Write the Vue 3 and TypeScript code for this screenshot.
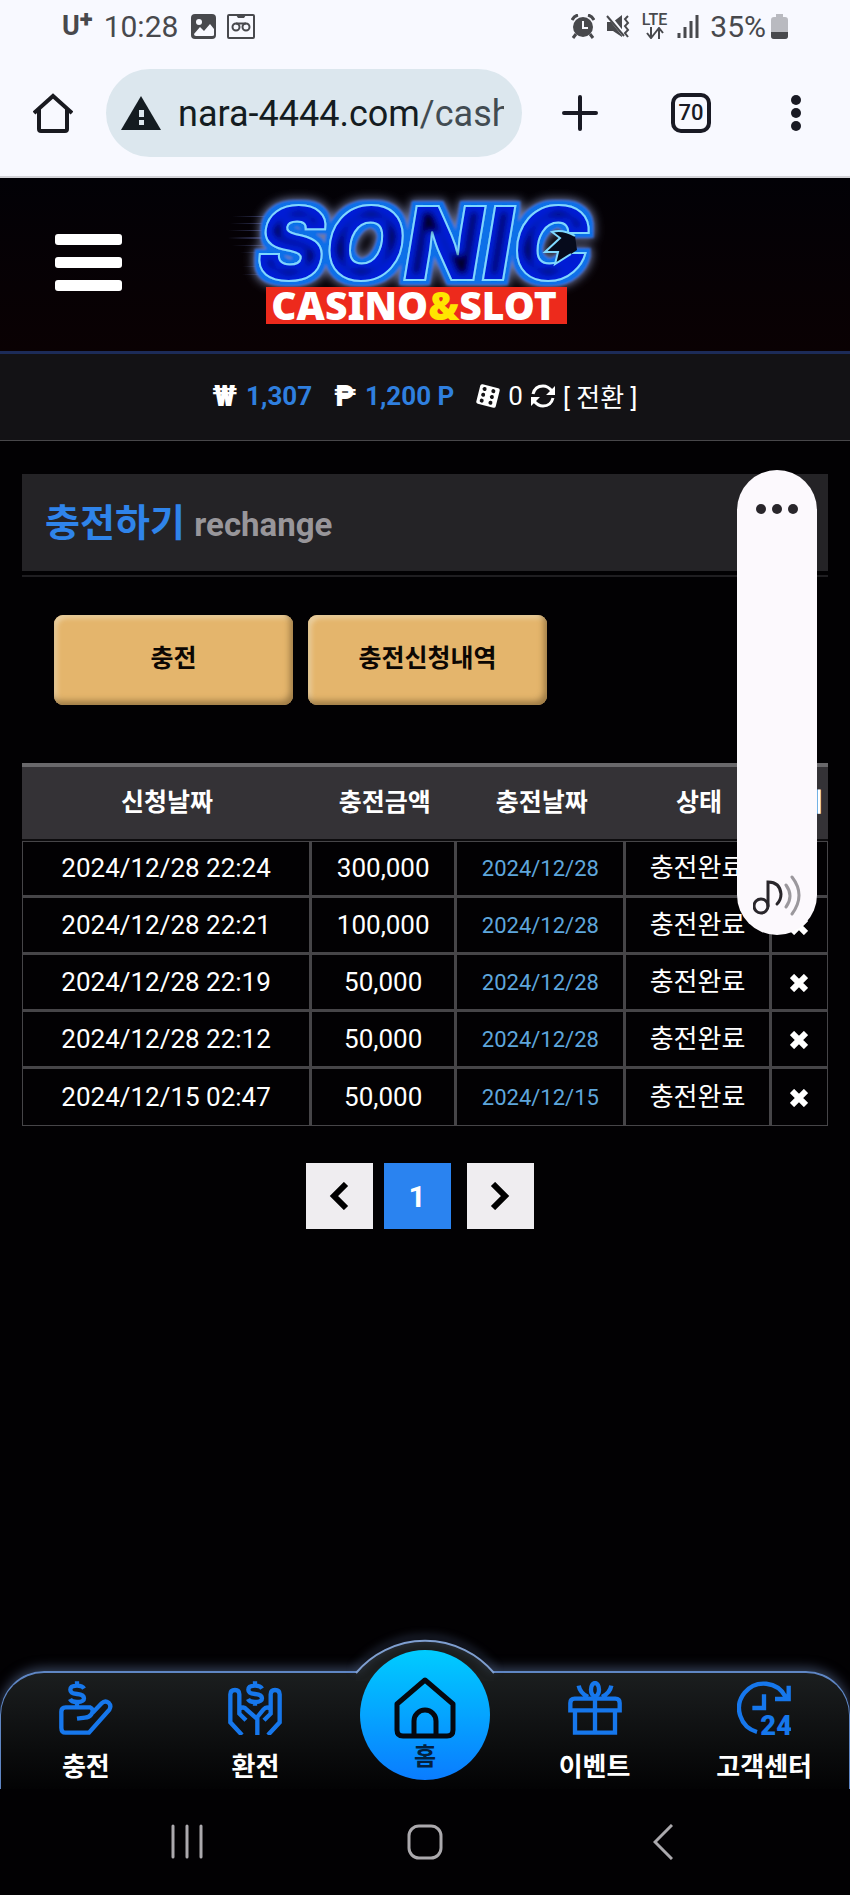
<script setup lang="ts">
interface Deposit {
  requested: string
  amount: string
  paid: string
  status: string
}

const columns: string[] = ['신청날짜', '충전금액', '충전날짜', '상태', '삭제']

const deposits: Deposit[] = [
  { requested: '2024/12/28 22:24', amount: '300,000', paid: '2024/12/28', status: '충전완료' },
  { requested: '2024/12/28 22:21', amount: '100,000', paid: '2024/12/28', status: '충전완료' },
  { requested: '2024/12/28 22:19', amount: '50,000', paid: '2024/12/28', status: '충전완료' },
  { requested: '2024/12/28 22:12', amount: '50,000', paid: '2024/12/28', status: '충전완료' },
  { requested: '2024/12/15 02:47', amount: '50,000', paid: '2024/12/15', status: '충전완료' },
]
</script>

<template>
  <div class="phone">
    <div class="chrome">
      <div class="status">
        <div class="status-side">
          <span class="carrier">U<b>+</b></span>
          <span class="clock">10:28</span>
          <svg class="st-image" width="25" height="25" viewBox="0 0 25 25">
            <rect width="25" height="25" rx="4" fill="#48494d" />
            <circle cx="8" cy="8" r="3" fill="#f8f9ff" />
            <path d="M3 20l6-7 4 4 6-7 4 5v6q0 1-2 1H5q-2 0-2-2z" fill="#f8f9ff" />
          </svg>
          <svg width="28" height="25" viewBox="0 0 28 25" fill="none" stroke="#48494d" stroke-width="2">
            <rect x="1" y="1" width="26" height="23" rx="1" />
            <path d="M9 1h10l-2 3h-6z" fill="#48494d" stroke="none" />
            <circle cx="9" cy="13" r="3.500" /><circle cx="19" cy="13" r="3.500" />
            <path d="M9 9.500h10" />
          </svg>
        </div>
        <div class="status-side right">
          <svg width="24" height="25" viewBox="0 0 24 25">
            <circle cx="12" cy="13" r="10" fill="#48494d" />
            <path d="M5 20l-3 4M19 20l3 4M1 6q2-4 6-5M23 6q-2-4-6-5" stroke="#48494d" stroke-width="3" fill="none" />
            <path d="M12 7v7h5" stroke="#f8f9ff" stroke-width="2" fill="none" />
          </svg>
          <svg class="st-mute" width="24" height="25" viewBox="0 0 24 25">
            <path d="M1 8h6l9-7v22l-9-6H1z" fill="#48494d" />
            <path d="M2 1l16 20" stroke="#f8f9ff" stroke-width="4" />
            <path d="M1 2l17 20" stroke="#48494d" stroke-width="2" />
            <path d="M22 2l-3 3 3 4-3 3 3 4-3 3 3 4" stroke="#48494d" stroke-width="2" fill="none" />
          </svg>
          <span class="lte">LTE
            <svg width="18" height="12" viewBox="0 0 18 12" fill="none" stroke="#48494d" stroke-width="2">
              <path d="M5 0v10M1 6l4 5 4-5M13 12V2M9 6l4-5 4 5" />
            </svg>
          </span>
          <svg class="st-signal" width="22" height="24" viewBox="0 0 22 24" stroke="#48494d" stroke-width="3">
            <path d="M2 24v-5M8 24V13M14 24V7M20 24V1" />
          </svg>
          <span class="clock">35%</span>
          <svg class="st-battery" width="17" height="25" viewBox="0 0 17 25">
            <path d="M5 0h7v3h2q3 0 3 3v16q0 3-3 3H3q-3 0-3-3V6q0-3 3-3h2z" fill="#b9bac0" />
            <path d="M0 18h17v4q0 3-3 3H3q-3 0-3-3z" fill="#48494d" />
          </svg>
        </div>
      </div>
      <div class="toolbar">
        <button type="button" class="plain" aria-label="Home">
          <svg width="40" height="40" viewBox="0 0 40 40" fill="none" stroke="#191a20" stroke-width="4">
            <path d="M1 20L20 3l19 17M6 16v20q0 2 2 2h24q2 0 2-2V16" />
          </svg>
        </button>
        <button type="button" class="address">
          <svg width="40" height="34" viewBox="0 0 40 34">
            <path d="M20 0l20 34H0z" fill="#141c21" />
            <path d="M18 14h5v7h-5zM18 24h5v5h-5z" fill="#dce7ee" />
          </svg>
          <span class="url">nara-4444.com<i>/cash</i></span>
        </button>
        <div class="actions">
          <button type="button" class="plain" aria-label="New tab">
            <svg width="36" height="36" viewBox="0 0 36 36" stroke="#191a24" stroke-width="4" stroke-linecap="round">
              <path d="M18 2v32M2 18h32" />
            </svg>
          </button>
          <button type="button" class="plain tabs" aria-label="70 tabs">70</button>
          <button type="button" class="plain" aria-label="Menu">
            <svg width="10" height="36" viewBox="0 0 10 36" fill="#191a24">
              <circle cx="5" cy="5" r="5" /><circle cx="5" cy="18" r="5" /><circle cx="5" cy="31" r="5" />
            </svg>
          </button>
        </div>
      </div>
    </div>

    <header class="site-head">
      <button type="button" class="plain burger" aria-label="메뉴"><i></i><i></i><i></i></button>
      <a href="#" class="logo">
        <svg width="400" height="150" viewBox="0 0 400 150" role="img">
          <defs>
            <filter id="neon" filterUnits="userSpaceOnUse" x="0" y="0" width="400" height="150">
              <feMorphology in="SourceAlpha" operator="dilate" radius="5" result="wide" />
              <feGaussianBlur in="wide" stdDeviation="5" result="haze" />
              <feFlood flood-color="#7480a8" /><feComposite in2="haze" operator="in" result="halo" />
              <feMorphology in="SourceAlpha" operator="dilate" radius="4" result="mid" />
              <feGaussianBlur in="mid" stdDeviation="1" result="midsoft" />
              <feFlood flood-color="#0a6fe8" /><feComposite in2="midsoft" operator="in" result="edge" />
              <feMorphology in="SourceAlpha" operator="erode" radius="7" result="thin" />
              <feGaussianBlur in="thin" stdDeviation="3" result="thinsoft" />
              <feFlood flood-color="#02062c" /><feComposite in2="thinsoft" operator="in" result="core" />
              <feMerge>
                <feMergeNode in="halo" /><feMergeNode in="edge" /><feMergeNode in="SourceGraphic" /><feMergeNode in="core" />
              </feMerge>
            </filter>
            <linearGradient id="speed"><stop offset="0" stop-color="#5b66a0" stop-opacity="0" /><stop offset="1" stop-color="#5b66c0" /></linearGradient>
          </defs>
          <g fill="url(#speed)">
            <rect x="7" y="38" width="60" height="1" /><rect x="5" y="45" width="60" height="1" />
            <rect x="3" y="52" width="60" height="1" /><rect x="3" y="59" width="60" height="2" />
            <rect x="7" y="67" width="60" height="1" /><rect x="15" y="74" width="50" height="1" />
            <rect x="17" y="88" width="40" height="1" /><rect x="17" y="96" width="40" height="1" />
          </g>
          <text x="198" y="102" class="sonic">SONIC</text>
          <path d="M350 58Q338 51 327 54L335 60 320 74H333L330 86 346 76 352 72Z" fill="#060b1c" />
          <path d="M350 58Q338 51 327 54L335 60 320 74H333L330 86 346 76" fill="none" stroke="#7fd8ff" stroke-width="2" />
          <rect x="41" y="109" width="301" height="37" fill="#ed2a1c" />
          <text x="189" y="142" class="casino">CASINO<tspan fill="#ffe600">&amp;</tspan>SLOT</text>
        </svg>
      </a>
    </header>

    <section class="balance">
      <span class="sign">₩</span><strong>1,307</strong>
      <span class="sign peso">₱</span><strong>1,200 P</strong>
      <svg class="dice" width="24" height="24" viewBox="0 0 24 24">
        <g transform="rotate(14 12 12)">
          <rect x="2" y="2" width="20" height="20" rx="2" fill="#fff" />
          <g fill="#131215">
            <circle cx="7" cy="6" r="2" /><circle cx="7" cy="12" r="2" /><circle cx="7" cy="18" r="2" />
            <circle cx="16" cy="6" r="2" /><circle cx="16" cy="12" r="2" /><circle cx="16" cy="18" r="2" />
          </g>
        </g>
      </svg>
      <span class="zero">0</span>
      <svg width="24" height="24" viewBox="0 0 24 24" fill="none" stroke="#fff" stroke-width="3">
        <path d="M2 10Q4 2 12 2q5 0 9 5M22 14q-2 8-10 8-5 0-9-5" />
        <path d="M24 2v9h-9zM0 22v-9h9z" fill="#fff" stroke="none" />
      </svg>
      <a href="#" class="swap">[ 전환 ]</a>
    </section>

    <main class="content">
      <div class="title"><h1>충전하기 <small>rechange</small></h1></div>
      <div class="choices">
        <button type="button">충전</button>
        <button type="button">충전신청내역</button>
      </div>
      <table>
        <colgroup><col class="c-req"><col class="c-amt"><col class="c-paid"><col class="c-amt"><col></colgroup>
        <thead>
          <tr><th v-for="c in columns" :key="c" scope="col">{{ c }}</th></tr>
        </thead>
        <tbody>
          <tr v-for="d in deposits" :key="d.requested">
            <td>{{ d.requested }}</td>
            <td>{{ d.amount }}</td>
            <td class="paid">{{ d.paid }}</td>
            <td>{{ d.status }}</td>
            <td>
              <button type="button" class="plain remove" aria-label="삭제">
                <svg width="18" height="18" viewBox="0 0 18 18" stroke="#fff" stroke-width="6"><path d="M2 2l14 14M16 2L2 16" /></svg>
              </button>
            </td>
          </tr>
        </tbody>
      </table>
      <nav class="pager" aria-label="페이지">
        <button type="button" aria-label="이전">
          <svg width="20" height="28" viewBox="0 0 20 28" fill="none" stroke="#000" stroke-width="6"><path d="M17 2L5 14l12 12" /></svg>
        </button>
        <button type="button" class="current">1</button>
        <button type="button" class="next" aria-label="다음">
          <svg width="20" height="28" viewBox="0 0 20 28" fill="none" stroke="#000" stroke-width="6"><path d="M3 2l12 12L3 26" /></svg>
        </button>
      </nav>

      <div class="volume">
        <button type="button" class="plain" aria-label="더보기">
          <svg width="42" height="10" viewBox="0 0 42 10" fill="#29262b"><circle cx="5" cy="5" r="5" /><circle cx="21" cy="5" r="5" /><circle cx="37" cy="5" r="5" /></svg>
        </button>
        <svg width="48" height="42" viewBox="0 0 48 42" fill="none" stroke-width="3" stroke-linecap="round">
          <g stroke="#29262b"><circle cx="8" cy="31" r="7" /><path d="M15 31V7q12 0 13 12 0 6-4 10" /></g>
          <path d="M33 10q8 11 0 22M39 2q14 18 0 37" stroke="#9b989d" />
        </svg>
      </div>
    </main>

    <nav class="dock">
      <svg class="bump" width="142" height="42" viewBox="0 0 142 42">
        <path d="M2 34A90 90 0 0 1 140 34V42H2z" fill="#1b1e1f" />
        <path class="bump-line" d="M2 34A90 90 0 0 1 140 34" fill="none" stroke="#7f9fd0" stroke-width="2" />
      </svg>
      <a href="#">
        <svg width="54" height="54" viewBox="0 0 162 162">
          <path d="M96 79H20Q7 79 7 92V140Q7 155 20 155H90L151 86Q158 74 149 65 138 57 128 67L100 96M94 79Q106 86 97 100 90 109 78 110L54 113M54 64V79" />
          <path d="M75 23Q70 14 54 14 34 14 34 26 34 37 54 39 75 41 75 52 75 63 54 63 37 63 33 54M54 1V14" />
        </svg>
        충전
      </a>
      <a href="#">
        <svg width="54" height="54" viewBox="0 0 162 162">
          <path d="M42 162L7 124V40Q7 27 21 27 34 27 34 40V98L54 118M34 84Q46 74 56 86L88 114V162" />
          <path d="M120 162L155 124V40Q155 27 141 27 128 27 128 40V98L108 118M128 84Q116 74 106 86L88 108" />
          <path d="M102 23Q97 14 81 14 61 14 61 26 61 37 81 39 102 41 102 52 102 63 81 63 64 63 60 54M81 1V14M81 63V74" />
        </svg>
        환전
      </a>
      <a href="#" class="home">
        <span class="disc">
          <svg width="62" height="62" viewBox="0 0 62 62" fill="none">
            <path d="M31 3L59 27V53Q59 59 53 59H9Q3 59 3 53V27ZM20 59V44A11 11 0 0 1 42 44V59" />
          </svg>
          홈
        </span>
      </a>
      <a href="#">
        <svg width="54" height="54" viewBox="0 0 162 162">
          <path d="M7 88V66Q7 53 20 53H142Q155 53 155 66V88ZM21 88V155H141V88M81 40V155M32 14Q36 36 60 48M130 14Q126 36 102 48" />
          <ellipse cx="81" cy="26" rx="12" ry="20" />
        </svg>
        이벤트
      </a>
      <a href="#">
        <svg width="54" height="54" viewBox="0 0 162 162">
          <path d="M60 153A74 74 0 1 1 146 48M155 14V54H114M81 40V81H46" />
          <text x="70" y="161">24</text>
        </svg>
        고객센터
      </a>
    </nav>

    <div class="system">
      <button type="button" class="plain" aria-label="Recents">
        <svg width="32" height="36" viewBox="0 0 32 36" stroke-linecap="round"><path d="M2 2v31M16 2v31M30 2v31" /></svg>
      </button>
      <button type="button" class="plain" aria-label="Home">
        <svg width="36" height="36" viewBox="0 0 36 36"><rect x="2" y="2" width="32" height="32" rx="10" /></svg>
      </button>
      <button type="button" class="plain" aria-label="Back">
        <svg width="20" height="36" viewBox="0 0 20 36"><path d="M19 1L2 18l17 17" /></svg>
      </button>
    </div>
  </div>
</template>

<style>
body {
  background: #000;
}
</style>

<style scoped>
.phone {
  min-height: 100vh;
  display: flex;
  flex-direction: column;
  background: #020103;
  color: #fff;
  font-family: Roboto, "Noto Sans CJK KR", sans-serif;
  font-size: 26px;
}
svg {
  display: block;
  flex: none;
}
button {
  font: inherit;
  border: 0;
  padding: 0;
}
a {
  color: inherit;
  text-decoration: none;
}
.plain {
  background: none;
  color: inherit;
}

.chrome {
  box-sizing: border-box;
  height: 178px;
  background: #f8f9ff;
  border-bottom: 2px solid #d3d3d8;
}
.status {
  display: flex;
  justify-content: space-between;
  height: 52px;
  padding: 0 62px;
  color: #48494d;
}
.status-side {
  display: flex;
  align-items: center;
  gap: 11px;
}
.right {
  gap: 0;
}
.carrier {
  display: flex;
  font-size: 27px;
  font-weight: 700;
  line-height: 30px;
}
.carrier b {
  font-size: 24px;
  line-height: 16px;
}
.clock {
  font-size: 30px;
}
.st-image {
  margin-left: 2px;
}
.st-mute {
  margin-left: 11px;
}
.lte {
  display: flex;
  flex-direction: column;
  align-items: center;
  margin-left: 12px;
  font-size: 16px;
  font-weight: 500;
  line-height: 14px;
}
.st-signal {
  margin: 0 11px 0 10px;
}
.st-battery {
  margin-left: 5px;
}
.toolbar {
  display: flex;
  align-items: center;
  height: 88px;
  margin-top: 17px;
  padding: 0 49px 0 33px;
}
.address {
  flex: 1;
  min-width: 0;
  display: flex;
  align-items: center;
  gap: 17px;
  height: 88px;
  margin-left: 33px;
  padding: 0 18px 0 15px;
  border-radius: 44px;
  background: #dce7ee;
  color: #141c21;
  font-size: 36px;
  text-align: left;
}
.url {
  flex: 1;
  padding-top: 2px;
  overflow: hidden;
  white-space: nowrap;
}
.url i {
  font-style: normal;
  color: #424c52;
}
.actions {
  display: flex;
  align-items: center;
  gap: 73px;
  margin-left: 40px;
}
.tabs {
  box-sizing: border-box;
  width: 40px;
  height: 40px;
  margin-right: 7px;
  border: 4px solid #191a24;
  border-radius: 10px;
  color: #191a24;
  font-size: 22px;
  font-weight: 500;
  line-height: 32px;
}

.site-head {
  box-sizing: border-box;
  display: grid;
  grid-template-columns: 1fr auto 1fr;
  height: 176px;
  border-bottom: 3px solid #1c2b58;
  background: linear-gradient(#020106, #0a0103);
}
.burger {
  display: grid;
  gap: 12px;
  align-self: start;
  width: 67px;
  margin: 56px 0 0 55px;
}
.burger i {
  height: 11px;
  border-radius: 3px;
  background: #fff;
}
.sonic {
  font: italic 900 102px Inter, sans-serif;
  text-anchor: middle;
  fill: #0620d8;
  stroke: #7fd8ff;
  stroke-width: 2px;
  filter: url(#neon);
}
.casino {
  font: 900 39px "Noto Sans", sans-serif;
  fill: #fff;
  text-anchor: middle;
}

.balance {
  display: flex;
  align-items: center;
  justify-content: center;
  height: 83px;
  padding-bottom: 3px;
  border-bottom: 1px solid #48474a;
  background: #131215;
}
.balance strong {
  margin-left: 9px;
  color: #2f7fdf;
}
.sign {
  font-size: 29px;
  font-weight: 900;
}
.peso,
.dice {
  margin-left: 22px;
}
.zero {
  margin: 0 8px;
}
.swap {
  margin-left: 8px;
}

.content {
  position: relative;
  flex: 1;
  padding: 33px 22px 0;
}
.title {
  padding-bottom: 4px;
  border-bottom: 2px solid #1f1e21;
}
h1 {
  margin: 0;
  padding: 3px 23px 0;
  background: #242326;
  color: #2f84ea;
  font-size: 38px;
  font-weight: 700;
  line-height: 92px;
}
small {
  color: #98969a;
  font-size: 33px;
}
.choices {
  display: flex;
  gap: 15px;
  margin: 38px 32px 58px;
}
.choices button {
  width: 239px;
  height: 90px;
  padding-bottom: 8px;
  border-radius: 9px;
  background: #e4b56c;
  box-shadow: inset -3px -4px 6px #9c7a45, inset 3px 3px 5px #ecd3a6;
  color: #0c0703;
  font-size: 25px;
  font-weight: 700;
}
table {
  width: 100%;
  table-layout: fixed;
  border-collapse: separate;
  border-spacing: 0;
  text-align: center;
}
.c-req {
  width: 36%;
}
.c-amt {
  width: 18%;
}
.c-paid {
  width: 21%;
}
th {
  height: 66px;
  padding: 0 0 6px;
  border-top: 4px solid #69686b;
  border-bottom: 2px solid #0c0b0d;
  background: #343236;
  font-size: 25px;
  font-weight: 700;
  white-space: nowrap;
}
td {
  box-sizing: border-box;
  height: 57px;
  padding: 0 0 1px;
  border: solid #464548;
  border-width: 0 3px 3px 0;
  line-height: 32px;
}
tbody tr:first-child td {
  border-top-width: 1px;
}
tbody tr:last-child td {
  border-bottom-width: 1px;
}
td:first-child {
  border-left-width: 1px;
}
td:last-child {
  border-right-width: 1px;
}
td.paid,
td:last-child {
  padding: 1px 0 0;
}
.paid {
  color: #5ea6dc;
  font-size: 22px;
}
.remove {
  display: block;
  margin: 0 auto;
}
.pager {
  display: flex;
  justify-content: center;
  gap: 11px;
  margin-top: 37px;
  padding-right: 11px;
}
.pager button {
  display: grid;
  place-items: center;
  width: 67px;
  height: 66px;
  background: #efedf0;
}
.pager .current {
  background: #2a83f0;
  color: #fff;
  font-size: 30px;
  font-weight: 700;
}
.pager .next {
  margin-left: 5px;
}
.volume {
  position: absolute;
  top: 29px;
  right: 33px;
  box-sizing: border-box;
  display: flex;
  flex-direction: column;
  align-items: center;
  justify-content: space-between;
  width: 80px;
  height: 465px;
  padding: 34px 0 18px;
  border-radius: 40px;
  background: #fcf9fd;
}

.dock {
  position: relative;
  display: grid;
  grid-template-columns: repeat(5, 1fr);
  box-sizing: border-box;
  height: 118px;
  border: 2px solid #5f86c4;
  border-width: 2px 1px 0;
  border-radius: 44px 44px 0 0;
  background: linear-gradient(#1b1e1f, #030304);
  box-shadow: 0 -3px 12px #36425a;
}
.bump {
  position: absolute;
  top: -34px;
  left: calc(50% - 71px);
  overflow: visible;
}
.bump-line {
  filter: drop-shadow(0 -3px 5px #6078a4);
}
.dock a {
  display: flex;
  flex-direction: column;
  align-items: center;
  gap: 15px;
  padding-top: 8px;
  font-weight: 700;
  line-height: 34px;
  white-space: nowrap;
}
.dock a > svg {
  fill: none;
  stroke: #1677ec;
  stroke-width: 13px;
}
.dock text {
  fill: #1677ec;
  stroke: none;
  font-size: 82px;
  font-weight: 900;
}
.dock .home {
  position: relative;
  padding: 0;
}
.disc {
  box-sizing: border-box;
  display: flex;
  flex-direction: column;
  align-items: center;
  width: 130px;
  height: 130px;
  margin-top: -23px;
  padding-top: 27px;
  border-radius: 50%;
  background: linear-gradient(#00ccff, #0a7cff);
  color: #03213f;
  font-size: 24px;
  line-height: 36px;
}
.disc path {
  stroke: #05080f;
  stroke-width: 5px;
  stroke-linejoin: round;
}

.system {
  position: relative;
  display: grid;
  grid-template-columns: repeat(3, 28%);
  justify-content: center;
  justify-items: center;
  align-items: center;
  height: 106px;
  background: #020103;
}
.system svg {
  fill: none;
  stroke: #aba9ad;
  stroke-width: 3px;
}
</style>
